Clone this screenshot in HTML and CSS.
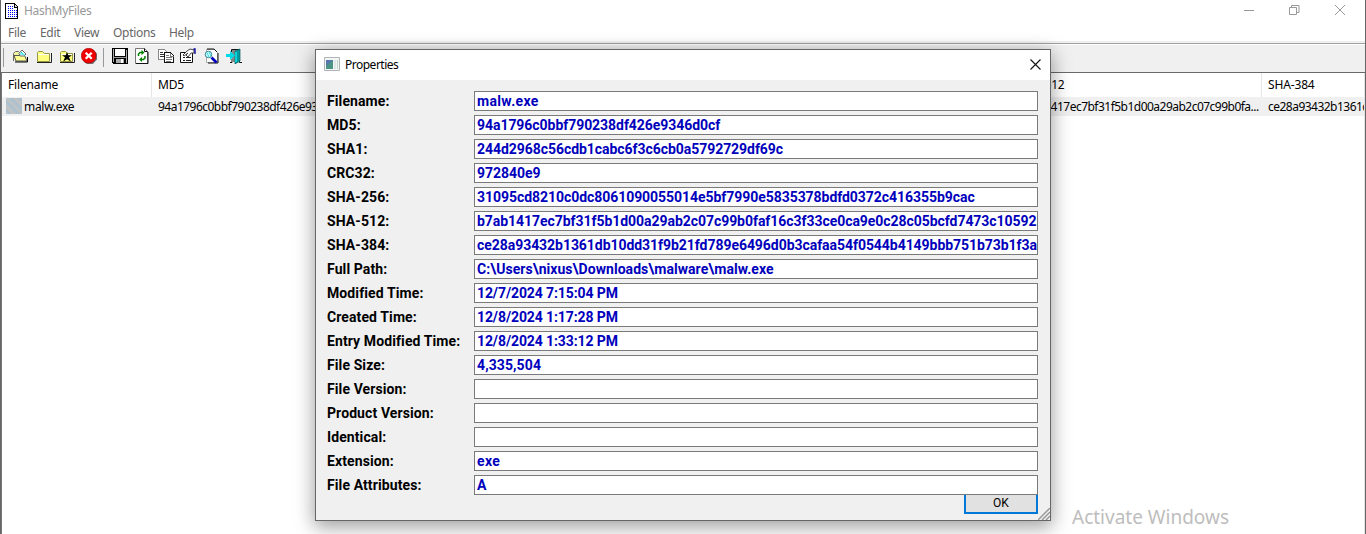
FILE: index.html
```html
<!DOCTYPE html>
<html lang="en">
<head>
<meta charset="utf-8">
<title>HashMyFiles</title>
<link rel="stylesheet" href="styles.css">
</head>
<body>
<main class="window">
  <header class="titlebar">
    <svg class="app-icon" width="16" height="16" viewBox="0 0 16 16" shape-rendering="crispEdges">
      <path d="M1 1h8l4 4v10H1z" fill="#fff"/><path d="M0 0h9v1H1v14h11v1H0zM9 0h1v1h1v1h1v1h1v13h-1V5H9z" fill="#000"/><path d="M10 2v2h2z" fill="#ddd"/>
      <path d="M3.500 3v11M5.500 3v11M7.500 3v11M9.500 7v7M11.500 7v7" stroke="#0000ff" stroke-dasharray="1 1"/>
    </svg>
    <span class="app-title">HashMyFiles</span>
    <svg class="controls" width="104" height="12" viewBox="0 0 104 12" fill="none" stroke="#999">
      <path d="M0 6.500h10M45.500 3.500h7v7h-7zM47.500 3V1.500h7.500v7H53M91 1l10 10M101 1L91 11"/>
    </svg>
  </header>
  <nav class="menu"><span class="m-file">File</span><span class="m-edit">Edit</span><span class="m-view">View</span><span class="m-options">Options</span><span>Help</span></nav>
  <div class="toolbar">
    <i class="sep first"></i>
    <svg class="tool" viewBox="0 0 16 16"><path d="M1.500 13V5.500l2-2h3l2 2" fill="#f6f6a0" stroke="#666"/><path d="M2 7.500h10.500l2.500 5.500H4z" fill="#ffff90" stroke="#555"/><path d="M7 5.500l3-3.500 4 4-2 2H8z" fill="#fff" stroke="#666"/><path d="M9 4l4 3.500M8 6h3" stroke="#00dce8"/><path d="M3 14h12.500V9" stroke="#000" fill="none"/></svg>
    <svg class="tool t2" viewBox="0 0 16 16"><path d="M1.500 13.500v-9l1-1h4l2 2h5v8z" fill="#ffff80" stroke="#969640"/><path d="M2 6.500h11" stroke="#fff"/><path d="M1 14.500h14.500V5" fill="none" stroke="#222"/></svg>
    <svg class="tool t3" viewBox="0 0 16 16"><path d="M1.500 13.500v-9l1-1h4l2 2h5v8z" fill="#ffff80" stroke="#969640"/><path d="M2 6.500h11" stroke="#fff"/><path d="M1 14.500h14.500V5" fill="none" stroke="#222"/><path d="M8 4l1.300 3.200H13l-3 2.100 1.800 4.200L8 11.200 4.200 13.500 6 9.300 3 7.200h3.700z" fill="#000"/></svg>
    <svg class="tool t4" viewBox="0 0 16 16"><path d="M5.500 1h6L16 5.500v6L12 16H6l-3-2z" fill="#777"/><circle cx="7.700" cy="7.700" r="7.400" fill="#f00000" stroke="#a80000" stroke-width=".6"/><path d="M4.700 4.700l6 6M10.700 4.700l-6 6" stroke="#fff" stroke-width="2.300"/></svg>
    <i class="sep second"></i>
    <svg class="tool t5" viewBox="0 0 16 16" shape-rendering="crispEdges"><path d="M0 0h16v16H1l-1-1z" fill="#000"/><path d="M1 1h1v13H1zM14 2h1v13h-1z" fill="#aaa"/><path d="M3 1h10v7H3z" fill="#fff"/><path d="M2 9h12v1H2z" fill="#999"/><path d="M4 11h8v4H4z" fill="#aaa"/><path d="M9 11h2v4H9z" fill="#fff"/></svg>
    <svg class="tool t6" viewBox="0 0 16 16"><path d="M1.500.5h9l3 3v12h-12z" fill="#fff" stroke="#777"/><path d="M10.500.5v3h3M2 15.500h12V4" fill="none" stroke="#111"/><path d="M4.500 8V6l1.500-1.500h3M11 8v2l-1.500 1.500H7" fill="none" stroke="#008000" stroke-width="1.500"/><path d="M7.500 2l3 2.500-3 2.500zM8 9l-3 2.500L8 14z" fill="#008000"/></svg>
    <svg class="tool t7" viewBox="0 0 16 16" shape-rendering="crispEdges"><path d="M.5 1.500h6l3 3v7h-9z" fill="#fff" stroke="#888"/><path d="M2 4.500h3M2 6.500h5M2 8.500h5" stroke="#333"/><path d="M6.500 4.500h6l3 3v7h-9z" fill="#fff" stroke="#111"/><path d="M12.500 5v3h3M8 7.500h3M8 9.500h6M8 11.500h6M8 13.500h5" fill="none" stroke="#777"/></svg>
    <svg class="tool t8" viewBox="0 0 16 16"><path d="M.5 4.500h12v10H.5z" fill="#fff" stroke="#111"/><path d="M3 9.500h2m1 0h5M3 12.500h2m1 0h5" stroke="#222"/><path d="M3 7l4-4 3-2 4 1v3h-3L8 9 6 7l2-2-4 3z" fill="#fff" stroke="#333" stroke-width=".9"/><path d="M13.500 1h1.500v5" fill="none" stroke="#0000a0" stroke-width="1.300"/></svg>
    <svg class="tool t9" viewBox="0 0 16 16"><path d="M2.500 1.500h8l3 3v10h-11z" fill="#fff" stroke="#aaa"/><path d="M3 1h7l3 3M14 5v10H4" fill="none" stroke="#111"/><circle cx="4.500" cy="6.500" r="3.300" fill="#b9f5fa" stroke="#3c8a91"/><path d="M3 6h1M5 5h1M4 8h1M6 7h1" stroke="#00c8d0"/><path d="M7.500 9.500l5 5" stroke="#0000c0" stroke-width="2.600"/></svg>
    <svg class="tool t10" viewBox="0 0 16 16"><path d="M5.500 4V1.500h8v13H16M4 14.500h2V11" fill="none" stroke="#111"/><path d="M6 2h4v12H6z" fill="#888"/><path d="M9 3l5-2v12l-5 3z" fill="#009aa0" stroke="#005d60" stroke-width=".7"/><path d="M10 4v10" stroke="#00eaf0" stroke-width="1.500"/><path d="M0 6h4V3l5 4.500L4 12V9H0z" fill="#00d9e6"/></svg>
  </div>
  <section class="list">
    <div class="row head"><span class="name">Filename</span><span class="md5">MD5</span><span class="sha512">SHA-512</span><span class="sha384">SHA-384</span></div>
    <div class="row item"><span class="name"><i class="file-icon"></i>malw.exe</span><span class="md5">94a1796c0bbf790238df426e934</span><span class="sha512">b7ab1417ec7bf31f5b1d00a29ab2c07c99b0fa...</span><span class="sha384">ce28a93432b1361d</span></div>
  </section>
</main>
<section class="dialog">
  <header class="dialog-title">
    <svg width="16" height="14" viewBox="0 0 16 14"><path d="M.5.500h15v13H.5z" fill="#f4f6f6" stroke="#aeb4b8"/><path d="M2 3h7v9H2z" fill="#4b9484"/><path d="M2 3h7L2 9z" fill="#5776ad"/><path d="M10 3h2v9h-2z" fill="#e0e5e7"/><path d="M13 3h1v9h-1z" fill="#bcd6c8"/></svg>
    <span>Properties</span>
    <svg class="close" width="11" height="11" viewBox="0 0 11 11"><path d="M.5.500l10 10M10.500.500l-10 10" stroke="#111" stroke-width="1.100"/></svg>
  </header>
  <div class="fields">
    <div class="field"><label>Filename:</label><output class="word">malw.exe</output></div>
    <div class="field"><label>MD5:</label><output>94a1796c0bbf790238df426e9346d0cf</output></div>
    <div class="field"><label>SHA1:</label><output>244d2968c56cdb1cabc6f3c6cb0a5792729df69c</output></div>
    <div class="field"><label>CRC32:</label><output>972840e9</output></div>
    <div class="field"><label>SHA-256:</label><output>31095cd8210c0dc8061090055014e5bf7990e5835378bdfd0372c416355b9cac</output></div>
    <div class="field"><label>SHA-512:</label><output>b7ab1417ec7bf31f5b1d00a29ab2c07c99b0faf16c3f33ce0ca9e0c28c05bcfd7473c10592</output></div>
    <div class="field"><label>SHA-384:</label><output>ce28a93432b1361db10dd31f9b21fd789e6496d0b3cafaa54f0544b4149bbb751b73b1f3a</output></div>
    <div class="field"><label>Full Path:</label><output class="path">C:\Users\nixus\Downloads\malware\malw.exe</output></div>
    <div class="field"><label>Modified Time:</label><output class="date">12/7/2024 7:15:04 PM</output></div>
    <div class="field"><label>Created Time:</label><output class="date">12/8/2024 1:17:28 PM</output></div>
    <div class="field"><label>Entry Modified Time:</label><output class="date">12/8/2024 1:33:12 PM</output></div>
    <div class="field"><label>File Size:</label><output class="size">4,335,504</output></div>
    <div class="field"><label>File Version:</label><output></output></div>
    <div class="field"><label>Product Version:</label><output></output></div>
    <div class="field"><label>Identical:</label><output></output></div>
    <div class="field"><label>Extension:</label><output class="word">exe</output></div>
    <div class="field"><label>File Attributes:</label><output>A</output></div>
  </div>
  <footer class="actions"><button class="ok">OK</button></footer>
  <svg class="grip" width="12" height="12" viewBox="0 0 12 12"><path d="M0 12L12 0M4 12l8-8M8 12l4-4" stroke="#999" stroke-width="1.500"/></svg>
</section>
<div class="watermark">Activate Windows</div>
</body>
</html>
```
FILE: styles.css
```css
* { box-sizing: border-box; }
body { margin: 0; height: 534px; overflow: hidden; background: #fff; font: 12px/16px "Noto Sans", "Open Sans", sans-serif; color: #000; }
svg { display: block; flex: none; }
.window { height: 534px; border-left: 1px solid #666; border-right: 1px solid #666; background: #fff; }
.titlebar { display: flex; height: 24px; padding: 3px 17px 0 4px; color: #999; }
.app-title { margin-left: 3px; letter-spacing: -.3px; }
.controls { margin-left: auto; margin-top: 1px; }
.menu { display: flex; height: 17px; padding-left: 7px; color: #666; line-height: 18px; letter-spacing: -.3px; }
.m-file { width: 32px; }
.m-edit { width: 34px; }
.m-view { width: 39px; }
.m-options { width: 56px; }
.toolbar { display: flex; height: 32px; padding-top: 7px; border-bottom: 1px solid #696969; background: linear-gradient(#f0f0f0 2px, #a0a0a0 2px, #a0a0a0 3px, #fff 3px, #fff 4px, #f0f0f0 4px); }
.sep { width: 1px; height: 19px; background: #999; }
.first { margin-left: 2px; margin-right: 8px; }
.second { margin-left: 6px; margin-right: 8px; }
.tool { width: 16px; height: 16px; }
.t2 { margin-left: 8px; }
.t3 { margin-left: 7px; }
.t4 { margin-left: 6px; }
.t6 { margin-left: 6px; }
.t7 { margin-left: 8px; }
.t8 { margin-left: 6px; }
.t9 { margin-left: 8px; }
.t10 { margin-left: 6px; }
.list { height: 461px; border-left: 1px solid #777; border-right: 1px solid #e3e3e3; overflow: hidden; }
.row { display: grid; grid-template-columns: 150px 860px 250px 102px; white-space: nowrap; }
.row > span { overflow: hidden; padding-left: 6px; letter-spacing: -.52px; }
.row.head > span { letter-spacing: -.15px; }
.head { height: 24px; line-height: 24px; }
.head .name, .head .sha512 { border-right: 1px solid #e5e5e5; }
.item { height: 19px; line-height: 20px; background: #f0f0f0; }
.item .name { display: flex; padding-left: 4px; }
.row.item .name { letter-spacing: -.3px; }
.file-icon { width: 16px; height: 16px; margin: 1px 2px 0 0; background: repeating-linear-gradient(45deg, #b8c4cc 0 2px, #adc0cf 2px 4px, #c3c3c3 4px 6px); }
.dialog { position: absolute; left: 315px; top: 49px; width: 736px; height: 472px; border: 1px solid #666; background: #f0f0f0; box-shadow: 0 5px 18px 1px rgba(0,0,0,.38); }
.dialog-title { display: flex; align-items: center; height: 30px; padding: 0 9px 2px 8px; background: #fff; }
.dialog-title span { margin: 2px 0 0 5px; letter-spacing: -.5px; }
.close { margin-left: auto; }
.fields { display: grid; gap: 4px; padding: 11px 12px 0 11px; font: bold 14px/20px Roboto, sans-serif; }
.field { display: grid; grid-template-columns: 147px 564px; height: 20px; white-space: nowrap; }
.field label { letter-spacing: .1px; }
.field output { overflow: hidden; height: 20px; padding-left: 2px; border: 1px solid #7a7a7a; background: #fff; color: #0000bc; line-height: 19px; letter-spacing: -.05px; }
.field .word { letter-spacing: .35px; }
.field .path { letter-spacing: .05px; }
.field .date { letter-spacing: -.1px; }
.field .size { letter-spacing: .1px; }
.actions { display: flex; justify-content: flex-end; padding-right: 12px; }
.ok { width: 74px; height: 19px; padding: 0 0 2px; border: 2px solid #0078d7; border-top: 0; background: #e1e1e1; color: #000; font: 12px/14px Roboto, sans-serif; }
.grip { position: absolute; right: 0; bottom: 0; }
.watermark { position: absolute; left: 1072px; top: 505px; color: #bdbdbd; font-size: 19px; line-height: 24px; white-space: nowrap; }
```
